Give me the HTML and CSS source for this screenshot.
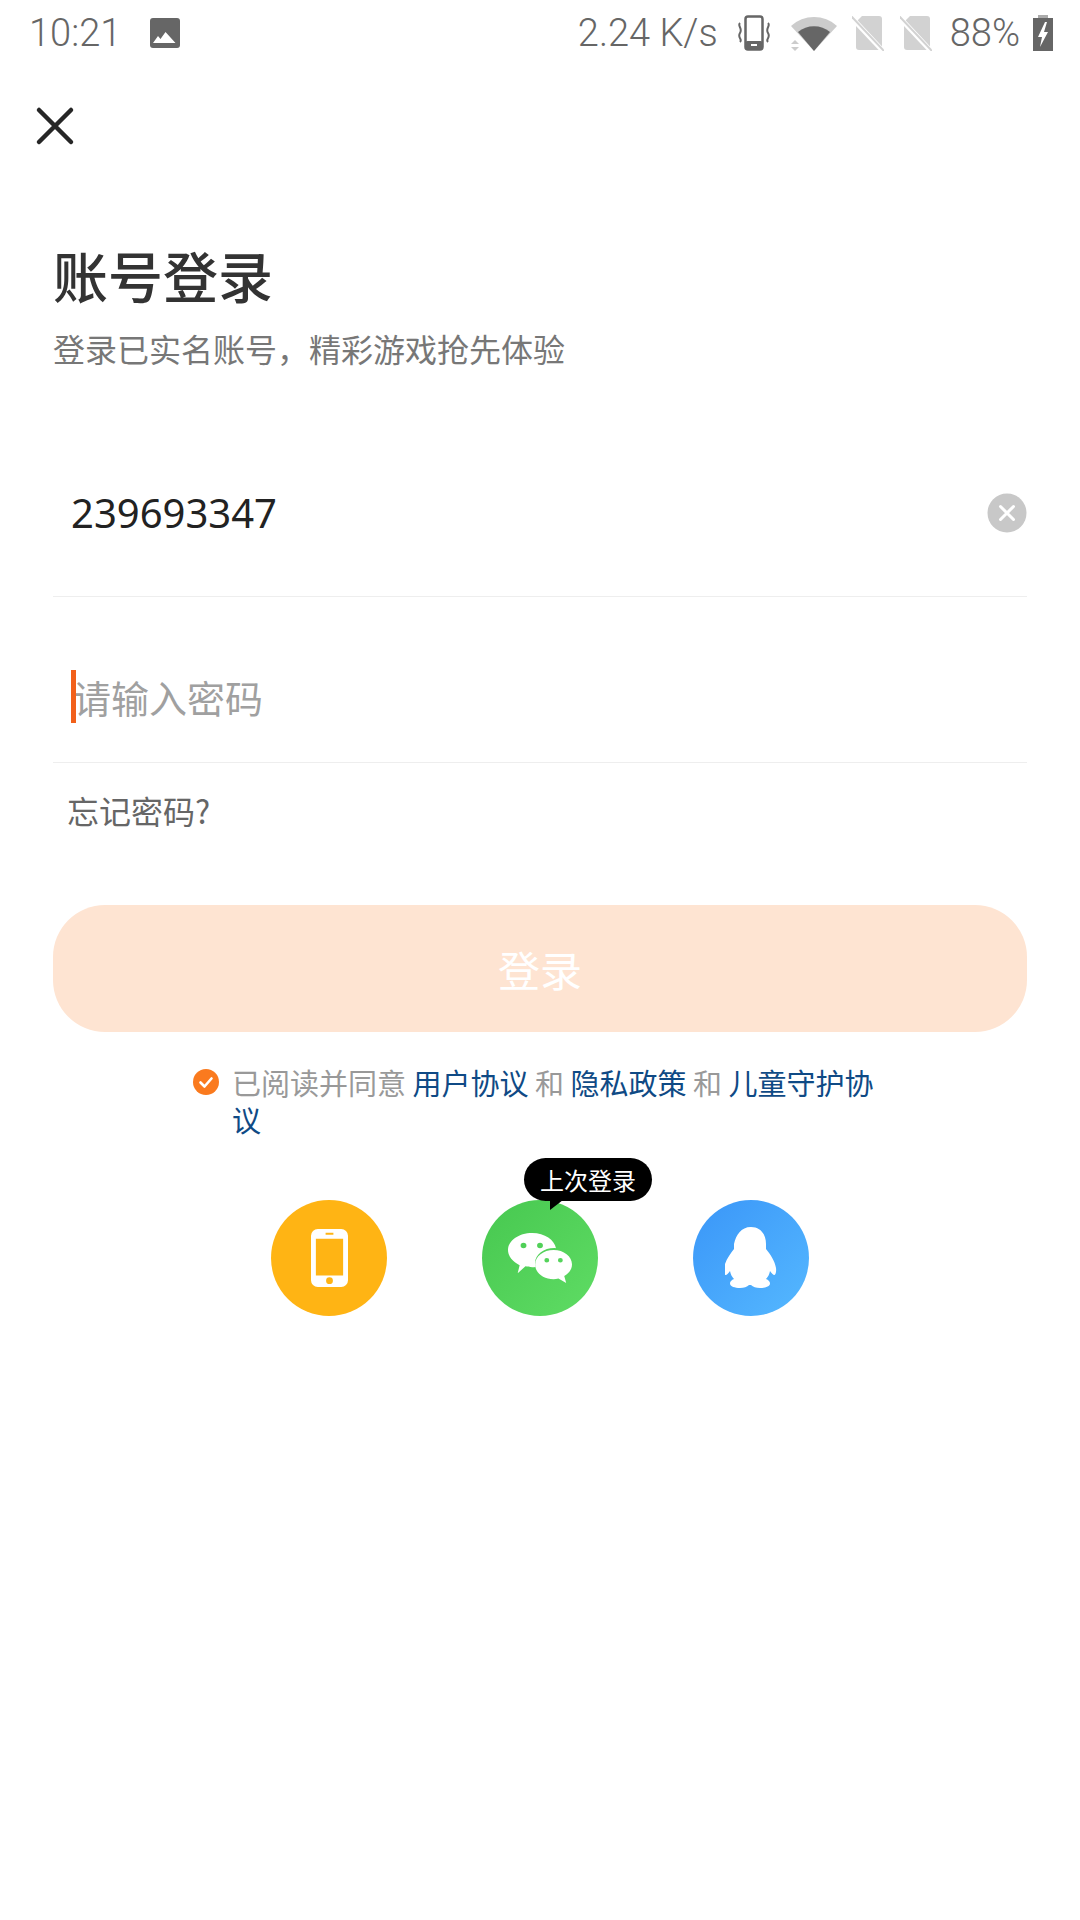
FILE: index.html
```html
<!DOCTYPE html>
<html lang="zh-CN">
<head>
    <meta charset="UTF-8">
    <meta name="viewport" content="width=device-width, initial-scale=1.0">
    <title>账号登录</title>
    <link rel="stylesheet" href="styles.css">
</head>
<body>
    <!-- status bar -->
    <div class="status-bar">
        <span class="time">10:21</span>
        <svg class="icon-photo" width="32" height="32" viewBox="0 0 32 32">
            <rect x="1" y="1" width="30" height="30" rx="3" fill="#666"/>
            <path d="M4 26l5-7 2.500 3 5-7 10 11z" fill="#fff"/>
        </svg>
        <div class="status-right">
            <span class="speed">2.24 K/s</span>
            <svg class="icon-vibrate" width="36" height="36" viewBox="0 0 36 36">
                <rect x="9.500" y="1.500" width="17" height="33" rx="2.500" fill="none" stroke="#666" stroke-width="2.500"/>
                <rect x="9.500" y="26" width="17" height="8.500" rx="2" fill="#666"/>
                <rect x="15" y="29" width="6" height="2" fill="#fff"/>
                <path d="M4 8c-3 3 3 5 0 10s3 6 0 9M32 8c3 3-3 5 0 10s-3 6 0 9" fill="none" stroke="#666" stroke-width="2"/>
            </svg>
            <svg class="icon-wifi" width="46" height="35" viewBox="0 0 46 35">
                <path d="M0 10a34 34 0 0 1 46 0L23 35z" fill="#ccc"/>
                <path d="M7 16a25 25 0 0 1 32 0L23 35z" fill="#666"/>
                <path d="M0 28l4-4 4 4zM0 31l4 4 4-4z" fill="#ccc"/>
            </svg>
            <svg class="icon-sim" width="32" height="36" viewBox="0 0 32 36">
                <path d="M10 1h17a3 3 0 0 1 3 3v28a3 3 0 0 1-3 3H7a3 3 0 0 1-3-3V7z" fill="#d2d2d2"/>
                <path d="M0 3l31 33" stroke="#fff" stroke-width="5"/>
                <path d="M-1 1l33 35" stroke="#d2d2d2" stroke-width="2"/>
            </svg>
            <svg class="icon-sim" width="32" height="36" viewBox="0 0 32 36">
                <path d="M10 1h17a3 3 0 0 1 3 3v28a3 3 0 0 1-3 3H7a3 3 0 0 1-3-3V7z" fill="#d2d2d2"/>
                <path d="M0 3l31 33" stroke="#fff" stroke-width="5"/>
                <path d="M-1 1l33 35" stroke="#d2d2d2" stroke-width="2"/>
            </svg>
            <span class="battery-text">88%</span>
            <svg class="icon-battery" width="20" height="36" viewBox="0 0 20 36">
                <path d="M5 0h10v3h5v33H0V3h5z" fill="#666"/>
                <path d="M0 0h20v3H0z" fill="#fff" opacity=".45"/>
                <path d="M12 7l-7 15h4l-2 10 8-15h-4l3-10z" fill="#fff"/>
            </svg>
        </div>
    </div>

    <div class="close">
        <svg width="40" height="40" viewBox="0 0 40 40">
            <path d="M4 4l32 32M36 4L4 36" stroke="#262626" stroke-width="4.500" stroke-linecap="round"/>
        </svg>
    </div>

    <div class="login">
        <h1 class="login-title">账号登录</h1>
        <p class="login-sub">登录已实名账号，精彩游戏抢先体验</p>

        <div class="field field-account">
            <span class="field-value">239693347</span>
            <svg class="field-clear" width="40" height="40" viewBox="0 0 40 40">
                <circle cx="20" cy="20" r="19.500" fill="#c8c8c8"/>
                <path d="M13.500 13.500l13 13M26.500 13.500l-13 13" stroke="#fff" stroke-width="3" stroke-linecap="round"/>
            </svg>
        </div>
        <div class="field field-password">
            <span class="caret"></span>
            <span class="field-placeholder">请输入密码</span>
        </div>
        <p class="forgot">忘记密码?</p>

        <button class="login-btn">登录</button>

        <div class="agree">
            <svg class="agree-check" width="26" height="26" viewBox="0 0 26 26">
                <circle cx="13" cy="13" r="13" fill="#fa7a1e"/>
                <path d="M7.500 13.500l4 4 7-8" fill="none" stroke="#fff" stroke-width="2.600" stroke-linecap="round" stroke-linejoin="round"/>
            </svg>
            <p class="agree-text">已阅读并同意 <a>用户协议</a> 和 <a>隐私政策</a> 和 <a>儿童守护协议</a></p>
        </div>

        <div class="others">
            <div class="other other-phone">
                <svg width="37" height="58" viewBox="0 0 38 60" preserveAspectRatio="none">
                    <path fill-rule="evenodd" d="M7 0h24a7 7 0 0 1 7 7v46a7 7 0 0 1-7 7H7a7 7 0 0 1-7-7V7a7 7 0 0 1 7-7zM5 10v38h28V10zM15 4v2h8V4zM19 50a3.500 3.500 0 1 0 0 7 3.500 3.500 0 0 0 0-7z" fill="#fff"/>
                </svg>
            </div>
            <div class="other other-wechat">
                <span class="tip">上次登录</span>
                <svg width="64" height="52" viewBox="0 0 66 58" preserveAspectRatio="none">
                    <path fill-rule="evenodd" d="M25 1c13 0 23 8 24.500 17C38 17 27 25 28 36c0 1 .2 2 .5 3-1.200.2-2.400.2-3.500.2-2.500 0-5-.4-7-1L10 46l2-9C5 33 0 27 0 20 0 9.500 11 1 25 1zM16 12a3 3 0 1 0 0 6 3 3 0 0 0 0-6zm17 0a3 3 0 1 0 0 6 3 3 0 0 0 0-6z" fill="#fff"/>
                    <path fill-rule="evenodd" d="M47 20c10.500 0 19 7 19 16 0 5.500-3 10-8 13l2 8-8-5c-1.800.4-3.500.6-5 .6-10.500 0-19-7-19-16.300S36.500 20 47 20zM40 29a2.500 2.500 0 1 0 0 5 2.500 2.500 0 0 0 0-5zm14 0a2.500 2.500 0 1 0 0 5 2.500 2.500 0 0 0 0-5z" fill="#fff"/>
                </svg>
            </div>
            <div class="other other-qq">
                <svg width="52" height="62" viewBox="0 0 52 62">
                    <path d="M26 0c10 0 15 8 15 17v5c4 5 9 12 10 19 .5 4-.5 7-1.500 7-1.500 0-3-2-4.500-4-.5 3-2 6-4 8 2.500 1 4 2.500 4 4.500 0 3-5 4.500-10 4.500-4 0-7-1-9-3-.5.1-1.500.1-2 0-2 2-5 3-9 3-5 0-10-1.500-10-4.500 0-2 1.500-3.500 4-4.500-2-2-3.500-5-4-8-1.500 2-3 4-4.500 4-1 0-2-3-1.500-7 1-7 6-14 10-19v-5C11 8 16 0 26 0z" fill="#fff"/>
                </svg>
            </div>
        </div>
    </div>
</body>
</html>
```

FILE: styles.css
```css
* {
    box-sizing: border-box;
}

body {
    margin: 0;
    width: 1080px;
    height: 1920px;
    background: #fff;
    overflow: hidden;
    font-family: "Noto Sans CJK SC", "Noto Sans", sans-serif;
}

/* status bar */
.status-bar {
    height: 66px;
    padding: 0 27px 0 29px;
    display: flex;
    align-items: center;
    color: #666;
    font-family: Roboto, "Noto Sans", sans-serif;
    font-weight: 300;
    font-size: 38px;
}

.icon-photo {
    margin-left: 28px;
}

.status-right {
    margin-left: auto;
    display: flex;
    align-items: center;
}

.icon-vibrate {
    margin-left: 18px;
}

.icon-wifi {
    margin-left: 19px;
}

.icon-sim {
    margin-left: 15px;
}

.icon-sim + .icon-sim {
    margin-left: 16px;
}

.battery-text {
    margin-left: 18px;
}

.icon-battery {
    margin-left: 13px;
}

/* close */
.close {
    padding: 40px 0 0 35px;
    height: 97px;
}

.close svg {
    display: block;
}

/* login form */
.login {
    padding: 0 53px 0 53px;
}

.login-title {
    margin: 75px 0 0 0;
    font-size: 55px;
    line-height: 72px;
    font-weight: 500;
    color: #333;
}

.login-sub {
    margin: 15px 0 0 0;
    font-size: 32px;
    line-height: 46px;
    color: #777;
}

.field {
    display: flex;
    align-items: center;
    border-bottom: 1px solid #eee;
    position: relative;
    padding-left: 18px;
}

.field-account {
    margin-top: 58px;
    height: 168px;
}

.field-value {
    font-family: "Noto Sans", sans-serif;
    font-size: 40px;
    color: #222;
}

.field-clear {
    margin-left: auto;
}

.field-password {
    height: 166px;
}

.caret {
    position: absolute;
    left: 18px;
    top: 73px;
    width: 5px;
    height: 53px;
    background: #f2601a;
}

.field-placeholder {
    font-size: 38px;
    color: #a0a0a0;
    margin-left: 2px;
    margin-top: 34px;
}

.forgot {
    margin: 0;
    padding: 25px 0 0 14px;
    font-size: 32px;
    line-height: 44px;
    color: #666;
}

.login-btn {
    display: block;
    width: 974px;
    height: 127px;
    margin-top: 73px;
    appearance: none;
    border: none;
    border-radius: 52px;
    background: #fee4d2;
    color: #fff;
    font-family: inherit;
    font-size: 42px;
}

.agree {
    margin: 32px 0 0 140px;
    display: flex;
    width: 700px;
}

.agree-check {
    flex: none;
    margin-top: 5px;
}

.agree-text {
    margin: 0 0 0 13px;
    font-size: 29px;
    line-height: 37px;
    color: #999;
}

.agree-text a {
    color: #0f4a85;
}

.others {
    margin-top: 62px;
    display: flex;
    justify-content: center;
    gap: 95px;
}

.other {
    width: 116px;
    height: 116px;
    border-radius: 50%;
    display: flex;
    align-items: center;
    justify-content: center;
    position: relative;
}

.other-phone {
    background: #ffb414;
}

.other-wechat {
    background: linear-gradient(135deg, #47c850, #5fdc64);
}

.other-qq {
    background: linear-gradient(135deg, #3a96f8, #55b8ff);
}

.tip {
    position: absolute;
    left: 42px;
    top: -42px;
    width: 128px;
    height: 43px;
    border-radius: 22px;
    background: #000;
    color: #fff;
    font-size: 24px;
    line-height: 43px;
    text-align: center;
}

.tip::after {
    content: "";
    position: absolute;
    left: 26px;
    top: 42px;
    border-top: 10px solid #000;
    border-right: 13px solid transparent;
}
```
